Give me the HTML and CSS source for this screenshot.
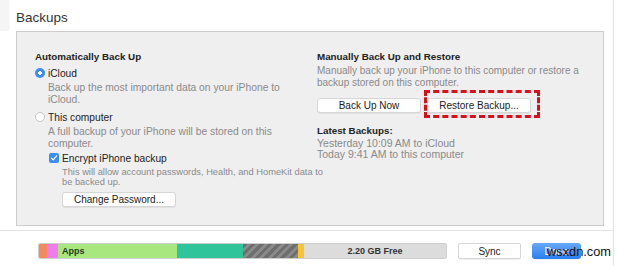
FILE: index.html
```html
<!DOCTYPE html>
<html>
<head>
<meta charset="utf-8">
<link rel="stylesheet" href="styles.css">
</head>
<body>
<div class="window">
  <header class="head"><h1 class="title">Backups</h1></header>
  <section class="panel">
    <div class="col col-left">
      <h2 class="heading">Automatically Back Up</h2>
      <div class="option">
        <span class="radio radio-on"></span><span class="label">iCloud</span>
      </div>
      <p class="desc desc-first">Back up the most important data on your iPhone to<br>iCloud.</p>
      <div class="option">
        <span class="radio"></span><span class="label">This computer</span>
      </div>
      <p class="desc">A full backup of your iPhone will be stored on this<br>computer.</p>
      <div class="sub">
        <div class="option option-sub">
          <span class="check"><svg viewBox="0 0 10 10" width="8" height="8"><path d="M1.8 5.2 L4 7.4 L8.3 2.4" fill="none" stroke="#fff" stroke-width="1.5" stroke-linecap="round" stroke-linejoin="round"/></svg></span><span class="label">Encrypt iPhone backup</span>
        </div>
        <p class="desc desc-small">This will allow account passwords, Health, and HomeKit data to<br>be backed up.</p>
        <button class="btn btn-pw">Change Password...</button>
      </div>
    </div>
    <div class="col col-right">
      <h2 class="heading">Manually Back Up and Restore</h2>
      <p class="desc desc-r">Manually back up your iPhone to this computer or restore a<br>backup stored on this computer.</p>
      <div class="btn-row">
        <button class="btn btn-now">Back Up Now</button>
        <div class="restore-wrap">
          <button class="btn btn-restore">Restore Backup...</button>
          <span class="highlight"></span>
        </div>
      </div>
      <h2 class="heading heading-latest">Latest Backups:</h2>
      <p class="desc desc-latest">Yesterday 10:09 AM to iCloud<br>Today 9:41 AM to this computer</p>
    </div>
  </section>
  <div class="rule"></div>
  <footer class="foot">
    <div class="storage">
      <span class="seg seg-orange"></span>
      <span class="seg seg-pink"></span>
      <span class="seg seg-green">Apps</span>
      <span class="seg seg-teal"></span>
      <span class="seg seg-hatch"></span>
      <span class="seg seg-yellow"></span>
      <span class="seg seg-free">2.20 GB Free</span>
    </div>
    <button class="btn btn-sync">Sync</button>
    <div class="done-wrap">
      <button class="btn btn-done">Done</button>
      <span class="watermark">wsxdn.com</span>
    </div>
  </footer>
</div>
</body>
</html>
```
FILE: styles.css
```css
* { box-sizing: border-box; }
html, body { margin: 0; padding: 0; background: #fff; }
body {
  font-family: "Liberation Sans", Arial, sans-serif;
  color: #222;
  width: 617px;
  height: 266px;
  overflow: hidden;
}
.window {
  width: 614px;
  height: 266px;
  border-right: 1px solid #e6e6e6;
}
.head {
  height: 31px;
  padding: 9px 0 0 16px;
  background: linear-gradient(to right, #f5f5f5 0, #f5f5f5 9px, #fff 10px);
}
.title {
  margin: 0;
  font-size: 13.5px;
  font-weight: normal;
  color: #333;
  line-height: 17px;
}
.panel {
  margin-left: 16px;
  width: 588px;
  height: 195px;
  border: 1px solid #cdcdcd;
  background: #efefef;
  display: flex;
  padding: 18px 0 0 18px;
}
.col-left { width: 282px; }
.col-right { flex: 1; }
.heading {
  margin: 0;
  font-size: 9.8px;
  font-weight: bold;
  color: #222;
  line-height: 14px;
}
.option {
  display: flex;
  align-items: center;
  height: 14px;
  margin-top: 2px;
}
.option-sub { margin-top: 0; }
.label { font-size: 10.2px; color: #222; }
.radio {
  width: 10px;
  height: 10px;
  border-radius: 50%;
  border: 1px solid #c4c4c4;
  background: #fff;
  margin-right: 3px;
  flex: none;
}
.radio-on {
  border: none;
  background: radial-gradient(circle, #fff 0 1.6px, #3a8ef0 2px);
}
.desc {
  margin: 2px 0 3px 13px;
  font-size: 10.3px;
  line-height: 11.5px;
  color: #8a8a8a;
}
.desc-first { margin-bottom: 5px; }
.sub { margin-left: 14px; margin-top: -1px; }
.check {
  width: 10px;
  height: 10px;
  border-radius: 2px;
  background: #3a8ef0;
  margin-right: 3px;
  display: flex;
  align-items: center;
  justify-content: center;
  flex: none;
}
.desc-small {
  font-size: 9.3px;
  line-height: 10px;
  margin: 2px 0 0 13px;
  white-space: nowrap;
}
.btn {
  font-family: "Liberation Sans", Arial, sans-serif;
  font-size: 10px;
  color: #222;
  background: #fff;
  border: 1px solid #d6d6d6;
  border-radius: 3px;
  height: 15px;
  padding: 0;
  line-height: 13px;
  box-shadow: 0 1px 0 rgba(0,0,0,0.06);
}
.btn-pw { width: 114px; margin: 5px 0 0 13px; display: block; }
.desc-r { margin: 1px 0 0 0; font-size: 10px; }
.btn-row {
  display: flex;
  gap: 6px;
  margin-top: 10px;
}
.btn-now { width: 104px; }
.restore-wrap { position: relative; }
.btn-restore { width: 104px; display: block; }
.highlight {
  position: absolute;
  left: -3px;
  top: -8px;
  width: 116px;
  height: 28px;
  border: 3px dashed #d8101c;
}
.heading-latest { margin-top: 11px; }
.desc-latest { margin: 0; line-height: 11px; font-size: 10.5px; }
.rule {
  margin-top: 4px;
  height: 1px;
  background: #e2e2e2;
}
.foot {
  display: flex;
  align-items: center;
  padding: 12px 0 0 38px;
}
.storage {
  display: flex;
  width: 409px;
  height: 16px;
  border-radius: 2px;
  overflow: hidden;
  border: 1px solid #cfcfcf;
}
.seg {
  height: 100%;
  font-size: 9px;
  font-weight: bold;
  color: #333;
  line-height: 14px;
}
.seg-orange { width: 8px; background: #f4895c; }
.seg-pink { width: 11px; background: #ef7bef; }
.seg-green { width: 119px; background: #a8e67e; padding-left: 4px; color: #2a3a20; }
.seg-teal { width: 66px; background: #30c49b; }
.seg-hatch {
  width: 55px;
  background: repeating-linear-gradient(135deg, #6e6e6e 0 3px, #8a8a8a 3px 6px);
}
.seg-yellow { width: 6px; background: #f8c532; }
.seg-free {
  flex: 1;
  background: #dcdcdc;
  text-align: center;
  color: #333;
  font-size: 9px;
}
.btn-sync { width: 63px; height: 16px; margin-left: 11px; border-radius: 2px; }
.done-wrap { position: relative; margin-left: 11px; }
.btn-done {
  width: 49px;
  height: 16px;
  border: none;
  border-radius: 3px;
  color: #fff;
  background: linear-gradient(#68a8f8, #2a7ef0);
  display: block;
}
.watermark {
  position: absolute;
  left: 15px;
  top: 1px;
  font-family: "Liberation Sans", Arial, sans-serif;
  font-size: 12.8px;
  line-height: 16px;
  color: #111;
  white-space: nowrap;
}
```
